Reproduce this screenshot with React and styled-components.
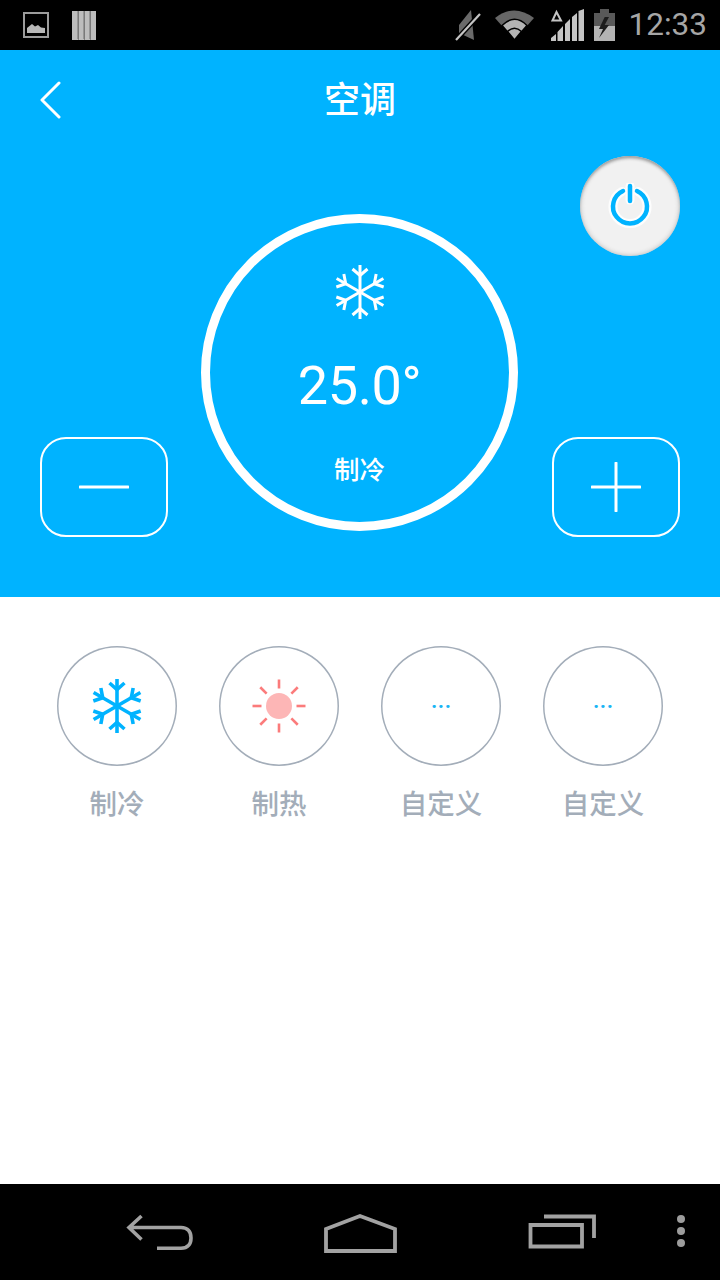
// App.jsx
import styled, { createGlobalStyle } from "styled-components";

const GlobalStyle = createGlobalStyle`
  html, body {
    margin: 0;
    padding: 0;
    background: #fff;
  }
  #root {
    width: 720px;
    height: 1280px;
  }
`;

const CJK = `Roboto, "Noto Sans CJK SC", sans-serif`;

const Screen = styled.div`
  width: 720px;
  height: 1280px;
  display: flex;
  flex-direction: column;
  font-family: ${CJK};
  overflow: hidden;
`;

const StatusBar = styled.div`
  height: 50px;
  flex: none;
  background: #000;
  display: flex;
  align-items: center;
  justify-content: space-between;
  padding: 0 13px 0 23px;
  box-sizing: border-box;
`;

const StatusGroup = styled.div`
  display: flex;
  align-items: center;
`;

const StatusIcon = styled.svg`
  display: block;
  flex: none;
  margin-left: ${(p) => p.$gap || 0}px;
`;

const Clock = styled.span`
  margin-left: 13px;
  font-family: Roboto, sans-serif;
  font-size: 31.500px;
  font-weight: 400;
  line-height: 50px;
  color: #a6a6a6;
`;

const BluePanel = styled.section`
  flex: none;
  height: 547px;
  background: #00b3ff;
  box-sizing: border-box;
`;

const Header = styled.header`
  height: 100px;
  display: grid;
  grid-template-columns: 1fr auto 1fr;
  align-items: center;
  padding: 0 40px;
  box-sizing: border-box;
`;

const BackButton = styled.svg`
  display: block;
`;

const Title = styled.h1`
  margin: 2px 0 0;
  font-size: 36px;
  font-weight: 500;
  line-height: 50px;
  color: #fff;
`;

const Controls = styled.div`
  display: grid;
  grid-template-columns: 128px 1fr 128px;
  height: 387px;
  padding: 0 40px;
  box-sizing: border-box;
`;

const LeftColumn = styled.div`
  display: flex;
  align-items: flex-end;
`;

const RightColumn = styled.div`
  display: flex;
  flex-direction: column;
  align-items: flex-end;
  justify-content: space-between;
  padding-top: 6px;
`;

const StepButton = styled.button`
  width: 128px;
  height: 100px;
  padding: 0;
  box-sizing: border-box;
  background: transparent;
  border: 2px solid #fff;
  border-radius: 26px;
  display: flex;
  align-items: center;
  justify-content: center;
`;

const PowerButton = styled.button`
  width: 100px;
  height: 100px;
  padding: 0;
  box-sizing: border-box;
  border: none;
  border-radius: 50%;
  background: #f1f1f1;
  box-shadow: inset 0 3px 3px -1px #a0a0a0, inset 0 0 5px #b4b4b4;
  display: flex;
  align-items: center;
  justify-content: center;
`;

const Dial = styled.div`
  width: 317px;
  height: 317px;
  margin: 64px 0 0 -1px;
  justify-self: center;
  box-sizing: border-box;
  border: 9px solid #fff;
  border-radius: 50%;
  display: flex;
  flex-direction: column;
  align-items: center;
  color: #fff;
`;

const DialIcon = styled.div`
  margin-top: 42px;
`;

const Temperature = styled.div`
  margin-top: 32px;
  font-family: Roboto, sans-serif;
  font-size: 54px;
  line-height: 70px;
  letter-spacing: -0.4px;
`;

const DialMode = styled.div`
  margin-top: 31px;
  font-size: 25.500px;
  font-weight: 500;
  line-height: 36px;
`;

const ModePanel = styled.section`
  flex: 1;
  background: #fff;
  display: flex;
  justify-content: center;
  align-items: flex-start;
  gap: 42px;
  padding-top: 49px;
`;

const ModeItem = styled.div`
  width: 120px;
  display: flex;
  flex-direction: column;
  align-items: center;
`;

const ModeCircle = styled.div`
  width: 120px;
  height: 120px;
  box-sizing: border-box;
  box-shadow: inset 0 0 0 1.5px #a3adb9;
  border-radius: 50%;
  display: flex;
  align-items: center;
  justify-content: center;
  color: #00b3ff;
`;

const More = styled.span`
  font-family: Roboto, sans-serif;
  font-size: 24px;
  font-weight: 500;
  line-height: 24px;
  margin-top: 2px;
  color: #19b5f5;
`;

const ModeLabel = styled.div`
  margin-top: 19px;
  font-size: 27.500px;
  font-weight: 500;
  line-height: 40px;
  color: #a3adb9;
`;

const NavBar = styled.nav`
  height: 96px;
  flex: none;
  background: #000;
  display: flex;
  align-items: flex-start;
  padding: 29px 0 0 126px;
  box-sizing: border-box;
`;

const NavIcon = styled.svg`
  display: block;
  flex: none;
  margin-left: ${(p) => p.$gap || 0}px;
`;

function Snowflake({ size, stroke = 3.2 }) {
  const arms = [0, 60, 120, 180, 240, 300];
  return (
    <svg width={size} height={size} viewBox="-27 -27 54 54" style={{ display: "block" }}>
      <g fill="none" stroke="currentColor" strokeWidth={stroke}>
        {arms.map((a) => (
          <g key={a} transform={`rotate(${a})`}>
            <path d="M0 0V-27" />
            <path d="M-7.500 -23L0 -16.500L7.500 -23" />
          </g>
        ))}
      </g>
    </svg>
  );
}

function Sun() {
  const rays = [0, 45, 90, 135, 180, 225, 270, 315];
  return (
    <svg width="56" height="56" viewBox="-28 -28 56 56" style={{ display: "block" }}>
      <circle r="13" fill="#fdb6b6" />
      <g stroke="#fb7b7b" strokeWidth="2.6">
        {rays.map((a) => (
          <path key={a} d="M0 -17.500V-26.500" transform={`rotate(${a})`} />
        ))}
      </g>
    </svg>
  );
}

const modes = [
  { label: "制冷", icon: <Snowflake size={54} stroke={3.6} /> },
  { label: "制热", icon: <Sun /> },
  { label: "自定义", icon: <More>···</More> },
  { label: "自定义", icon: <More>···</More> },
];

export default function App() {
  return (
    <Screen>
      <GlobalStyle />
      <StatusBar>
        <StatusGroup>
          <StatusIcon width="26" height="26" viewBox="0 0 26 26">
            <rect x="1" y="1" width="24" height="24" fill="none" stroke="#9c9c9c" strokeWidth="2" />
            <path d="M4 21V16L9 12L12 14.500L15 13L18 15.500L22 16V21Z" fill="#b8b8b8" />
          </StatusIcon>
          <StatusIcon $gap={23} width="25" height="30" viewBox="0 0 25 30">
            <path d="M0 1H6V30H0ZM6.300 1H12V30H6.300ZM12.300 1H18V30H12.300ZM18.300 1H24V30H18.300Z" fill="#bdbdbd" />
            <path d="M6 1V29M12 1V29M18 1V29" stroke="#6f6f6f" strokeWidth="1" />
          </StatusIcon>
        </StatusGroup>
        <StatusGroup>
          <StatusIcon width="26" height="32" viewBox="456 9 26 32">
            <path d="M460 25L472 10L475 40L460 33Z" fill="#6a6a6a" />
            <path d="M457 40L481 14" stroke="#000" strokeWidth="5" />
            <path d="M457 40L481 14" stroke="#c4c4c4" strokeWidth="2.200" />
          </StatusIcon>
          <StatusIcon $gap={14} width="40" height="30" viewBox="495 9 40 30">
            <path d="M495 17Q514 2 534 17L514.500 39Z" fill="#666" />
            <path d="M502 24.500Q514.500 12 527 24.500L514.500 39Z" fill="#b4b4b4" stroke="#000" strokeWidth="1.600" />
            <path d="M507.500 30.500Q514.500 24 521.500 30.500L514.500 39Z" fill="#b4b4b4" stroke="#000" strokeWidth="1.600" />
          </StatusIcon>
          <StatusIcon $gap={16} width="34" height="33" viewBox="552 9 34 33">
            <path d="M553.500 20.500L557.500 12L562 20.500Z" fill="none" stroke="#c4c4c4" strokeWidth="2" />
            <path d="M552 41V38L557 34V41ZM558.500 41V32L564 26V41ZM566 41V24L571 19V41ZM573 41V17L578 13V41ZM579.500 41V11L585 9V41Z" fill="#c4c4c4" />
          </StatusIcon>
          <StatusIcon $gap={9} width="22" height="33" viewBox="595 8 22 33">
            <path d="M601 8H610V12H616V25H595V12H601Z" fill="#595959" />
            <path d="M595 25H616V40H595Z" fill="#b4b4b4" />
            <path d="M605.700 16L600 28H604L600 37L610 24H605.700L610 16Z" fill="#1c1c1c" />
          </StatusIcon>
          <Clock>12:33</Clock>
        </StatusGroup>
      </StatusBar>

      <BluePanel>
        <Header>
          <BackButton width="22" height="40" viewBox="0 0 22 40">
            <path d="M19 3L2 20L19 37" fill="none" stroke="#fff" strokeWidth="3" strokeLinecap="round" strokeLinejoin="round" />
          </BackButton>
          <Title>空调</Title>
        </Header>
        <Controls>
          <LeftColumn>
            <StepButton>
              <svg width="50" height="4" viewBox="0 0 50 4">
                <path d="M1 2H49" stroke="#fff" strokeWidth="3" strokeLinecap="round" />
              </svg>
            </StepButton>
          </LeftColumn>
          <Dial>
            <DialIcon>
              <Snowflake size={54} stroke={3} />
            </DialIcon>
            <Temperature>25.0°</Temperature>
            <DialMode>制冷</DialMode>
          </Dial>
          <RightColumn>
            <PowerButton>
              <svg width="46" height="46" viewBox="-23 -23 46 46">
                <g fill="none" strokeLinecap="round">
                  <path d="M-8 -14.500A17 17 0 1 0 8 -14.500" stroke="#fff" strokeWidth="9" opacity="0.85" />
                  <path d="M0 -20V-6" stroke="#fff" strokeWidth="9" opacity="0.85" />
                  <path d="M-7 -15A17 17 0 1 0 7 -15" stroke="#00b3ff" strokeWidth="4.500" />
                  <path d="M0 -20V-5" stroke="#00b3ff" strokeWidth="4.500" />
                </g>
              </svg>
            </PowerButton>
            <StepButton>
              <svg width="50" height="50" viewBox="0 0 50 50">
                <path d="M1 25H49M25 1V49" stroke="#fff" strokeWidth="3" strokeLinecap="round" />
              </svg>
            </StepButton>
          </RightColumn>
        </Controls>
      </BluePanel>

      <ModePanel>
        {modes.map((mode, i) => (
          <ModeItem key={i}>
            <ModeCircle>{mode.icon}</ModeCircle>
            <ModeLabel>{mode.label}</ModeLabel>
          </ModeItem>
        ))}
      </ModePanel>

      <NavBar>
        <NavIcon width="68" height="38" viewBox="126 1215 68 38">
          <path d="M141.500 1218L129 1229.500L141.500 1241.500M129 1229.500H181C188 1229.500 191 1234 191 1240C191 1246 188 1250.300 181 1250.300H157" fill="none" stroke="#a2a2a2" strokeWidth="3.600" />
        </NavIcon>
        <NavIcon $gap={129} width="74" height="40" viewBox="323 1213 74 40">
          <path d="M326 1229L360 1216L395 1229V1251H326Z" fill="none" stroke="#a2a2a2" strokeWidth="3.800" />
        </NavIcon>
        <NavIcon $gap={130} width="70" height="36" viewBox="527 1217 70 36">
          <path d="M530.500 1229H582V1250.500H530.500Z" fill="none" stroke="#a2a2a2" strokeWidth="3.800" />
          <path d="M544 1220.500H594V1242" fill="none" stroke="#a2a2a2" strokeWidth="3.800" />
        </NavIcon>
        <NavIcon $gap={79} width="10" height="34" viewBox="0 0 10 34">
          <circle cx="5" cy="6" r="4" fill="#9c9c9c" />
          <circle cx="5" cy="18" r="4" fill="#9c9c9c" />
          <circle cx="5" cy="30" r="4" fill="#9c9c9c" />
        </NavIcon>
      </NavBar>
    </Screen>
  );
}
